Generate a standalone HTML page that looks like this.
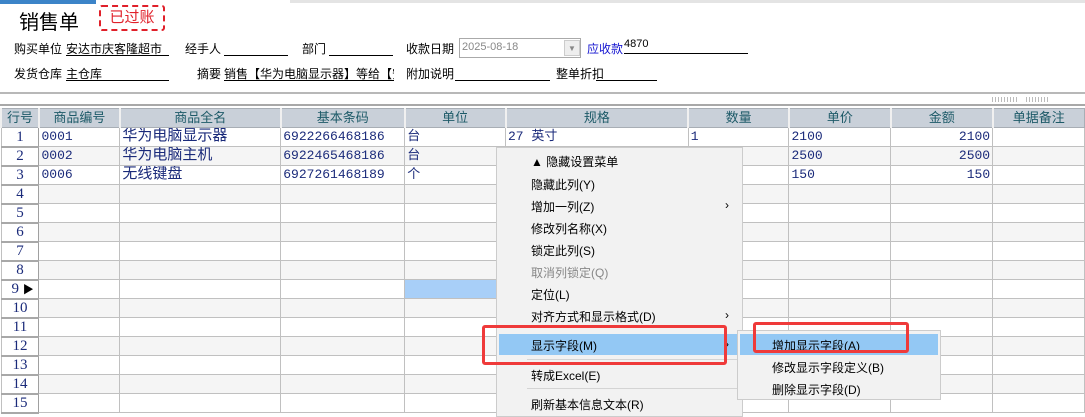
<!DOCTYPE html>
<html><head><meta charset="utf-8"><style>
*{margin:0;padding:0;box-sizing:border-box}
body{width:1085px;height:411px;overflow:hidden;background:#fff;font-family:"Liberation Sans","Noto Sans CJK SC",sans-serif;font-size:12px;color:#000;position:relative}
.a{position:absolute;white-space:nowrap}
.u{border-bottom:1px solid #000;height:16px}
table{position:absolute;left:0;top:108px;border-collapse:collapse;table-layout:fixed}
tr{height:19px}
td{border:1px solid #c0c0c0;height:18px;padding:0 2px;font-size:13px;color:#1a2a7a;overflow:hidden;white-space:nowrap;line-height:16px;font-family:"Liberation Mono","Noto Sans CJK SC",monospace}
th{background:#c9d0d9;color:#1d5a68;font-weight:normal;font-size:13px;height:18px;line-height:16px;border:1px solid #a8aeb5;border-left:2px solid #f0f0f0}
tr:nth-child(odd) td{background:#f5f5f5}
td.n{background:#fff!important;text-align:center;border-right:1px solid #a0a0a0;border-bottom:2px solid #a8a8a8;font-family:"Liberation Serif","Noto Sans CJK SC",serif;font-size:15px}
.r{text-align:right}
.m{position:absolute;background:#f2f2f2;border:1px solid #ccc;font-size:12px}
.mi{position:absolute;left:34px;white-space:nowrap}
</style></head><body>
<div class="a" style="left:0;top:0;width:96px;height:4px;background:#3c84c8"></div>
<div class="a" style="left:290px;top:0;width:795px;height:3px;background:#e4e4e4"></div>
<div class="a" style="left:19px;top:6px;font-size:20px">销售单</div>
<div class="a" style="left:99px;top:5px;width:66px;height:26px;border:2px dashed #e0202a;border-radius:3px;color:#e0202a;font-size:15px;text-align:center;line-height:22px">已过账</div>

<div class="a" style="left:14px;top:40px">购买单位</div>
<div class="a u" style="left:66px;top:40px;width:103px">安达市庆客隆超市</div>
<div class="a" style="left:185px;top:40px">经手人</div>
<div class="a u" style="left:224px;top:40px;width:64px"></div>
<div class="a" style="left:302px;top:40px">部门</div>
<div class="a u" style="left:329px;top:40px;width:64px"></div>
<div class="a" style="left:406px;top:40px">收款日期</div>
<div class="a" style="left:459px;top:38px;width:122px;height:20px;border:1px solid #aaa;color:#888;font-size:11px;padding:2px 2px">2025-08-18</div>
<div class="a" style="left:564px;top:40px;width:16px;height:16px;background:#eee;border:1px solid #ccc;color:#888;font-size:8px;text-align:center;line-height:15px">▼</div>
<div class="a" style="left:587px;top:40px;color:#1515d0">应收款</div>
<div class="a u" style="left:624px;top:38px;width:124px;font-size:11px">4870</div>

<div class="a" style="left:14px;top:65px">发货仓库</div>
<div class="a u" style="left:66px;top:65px;width:103px">主仓库</div>
<div class="a" style="left:197px;top:65px">摘要</div>
<div class="a u" style="left:224px;top:65px;width:170px;overflow:hidden">销售【华为电脑显示器】等给【安</div>
<div class="a" style="left:406px;top:65px">附加说明</div>
<div class="a u" style="left:455px;top:65px;width:95px"></div>
<div class="a" style="left:556px;top:65px">整单折扣</div>
<div class="a u" style="left:596px;top:65px;width:61px"></div>

<div class="a" style="left:0;top:92px;width:1085px;height:2px;background:#b8b8b8"></div>
<div class="a" style="left:0;top:104px;width:1085px;height:2px;background:#a8a8a8"></div>
<div class="a" style="left:992px;top:97px;width:25px;height:5px;background:repeating-linear-gradient(90deg,#bbb 0 1px,#fff 1px 3px)"></div>
<div class="a" style="left:1026px;top:97px;width:24px;height:5px;background:repeating-linear-gradient(90deg,#bbb 0 1px,#fff 1px 3px)"></div>

<table>
<colgroup><col style="width:38px"><col style="width:81px"><col style="width:161px"><col style="width:124px"><col style="width:101px"><col style="width:183px"><col style="width:101px"><col style="width:102px"><col style="width:102px"><col style="width:92px"></colgroup>
<tr><th>行号</th><th>商品编号</th><th>商品全名</th><th>基本条码</th><th>单位</th><th>规格</th><th>数量</th><th>单价</th><th>金额</th><th>单据备注</th></tr>
<tr><td class="n">1</td><td>0001</td><td style="font-size:15px">华为电脑显示器</td><td>6922266468186</td><td>台</td><td>27 英寸</td><td>1</td><td>2100</td><td class="r">2100</td><td></td></tr>
<tr><td class="n">2</td><td>0002</td><td style="font-size:15px">华为电脑主机</td><td>6922465468186</td><td>台</td><td></td><td></td><td>2500</td><td class="r">2500</td><td></td></tr>
<tr><td class="n">3</td><td>0006</td><td style="font-size:15px">无线键盘</td><td>6927261468189</td><td>个</td><td></td><td></td><td>150</td><td class="r">150</td><td></td></tr>
<tr><td class="n">4</td><td></td><td></td><td></td><td></td><td></td><td></td><td></td><td></td><td></td></tr>
<tr><td class="n">5</td><td></td><td></td><td></td><td></td><td></td><td></td><td></td><td></td><td></td></tr>
<tr><td class="n">6</td><td></td><td></td><td></td><td></td><td></td><td></td><td></td><td></td><td></td></tr>
<tr><td class="n">7</td><td></td><td></td><td></td><td></td><td></td><td></td><td></td><td></td><td></td></tr>
<tr><td class="n">8</td><td></td><td></td><td></td><td></td><td></td><td></td><td></td><td></td><td></td></tr>
<tr><td class="n" style="text-align:left;padding-left:10px">9 <span style="font-size:11px;color:#000">▶</span></td><td style="background:#fff"></td><td style="background:#fff"></td><td style="background:#fff"></td><td style="background:#a8cff8"></td><td style="background:#fff"></td><td style="background:#fff"></td><td style="background:#fff"></td><td style="background:#fff"></td><td style="background:#fff"></td></tr>
<tr><td class="n">10</td><td></td><td></td><td></td><td></td><td></td><td></td><td></td><td></td><td></td></tr>
<tr><td class="n">11</td><td></td><td></td><td></td><td></td><td></td><td></td><td></td><td></td><td></td></tr>
<tr><td class="n">12</td><td></td><td></td><td></td><td></td><td></td><td></td><td></td><td></td><td></td></tr>
<tr><td class="n">13</td><td></td><td></td><td></td><td></td><td></td><td></td><td></td><td></td><td></td></tr>
<tr><td class="n">14</td><td></td><td></td><td></td><td></td><td></td><td></td><td></td><td></td><td></td></tr>
<tr><td class="n">15</td><td></td><td></td><td></td><td></td><td></td><td></td><td></td><td></td><td></td></tr>
</table>

<div class="m" style="left:496px;top:147px;width:247px;height:270px">
<div class="mi" style="top:5px">▲ 隐藏设置菜单</div>
<div class="mi" style="top:28px">隐藏此列(Y)</div>
<div class="mi" style="top:50px">增加一列(Z)</div><div class="a" style="left:228px;top:50px">›</div>
<div class="mi" style="top:72px">修改列名称(X)</div>
<div class="mi" style="top:94px">锁定此列(S)</div>
<div class="mi" style="top:116px;color:#888">取消列锁定(Q)</div>
<div class="mi" style="top:138px">定位(L)</div>
<div class="mi" style="top:160px">对齐方式和显示格式(D)</div><div class="a" style="left:228px;top:160px">›</div>
<div class="a" style="left:2px;top:186px;width:242px;height:21px;background:#93c8f4"></div>
<div class="mi" style="top:189px">显示字段(M)</div><div class="a" style="left:228px;top:189px">›</div>
<div class="a" style="left:30px;top:211px;width:214px;height:1px;background:#d4d4d4"></div>
<div class="mi" style="top:219px">转成Excel(E)</div>
<div class="a" style="left:30px;top:240px;width:214px;height:1px;background:#d4d4d4"></div>
<div class="mi" style="top:248px">刷新基本信息文本(R)</div>
</div>
<div class="m" style="left:737px;top:330px;width:204px;height:70px">
<div class="a" style="left:2px;top:3px;width:198px;height:21px;background:#93c8f4"></div>
<div class="mi" style="top:6px">增加显示字段(A)</div>
<div class="mi" style="top:28px">修改显示字段定义(B)</div>
<div class="mi" style="top:50px">删除显示字段(D)</div>
</div>
<div class="a" style="left:482px;top:325px;width:245px;height:40px;border:3px solid #ef3a3a;border-radius:3px"></div>
<div class="a" style="left:753px;top:322px;width:156px;height:31px;border:3px solid #ef3a3a;border-radius:3px"></div>
</body></html>
